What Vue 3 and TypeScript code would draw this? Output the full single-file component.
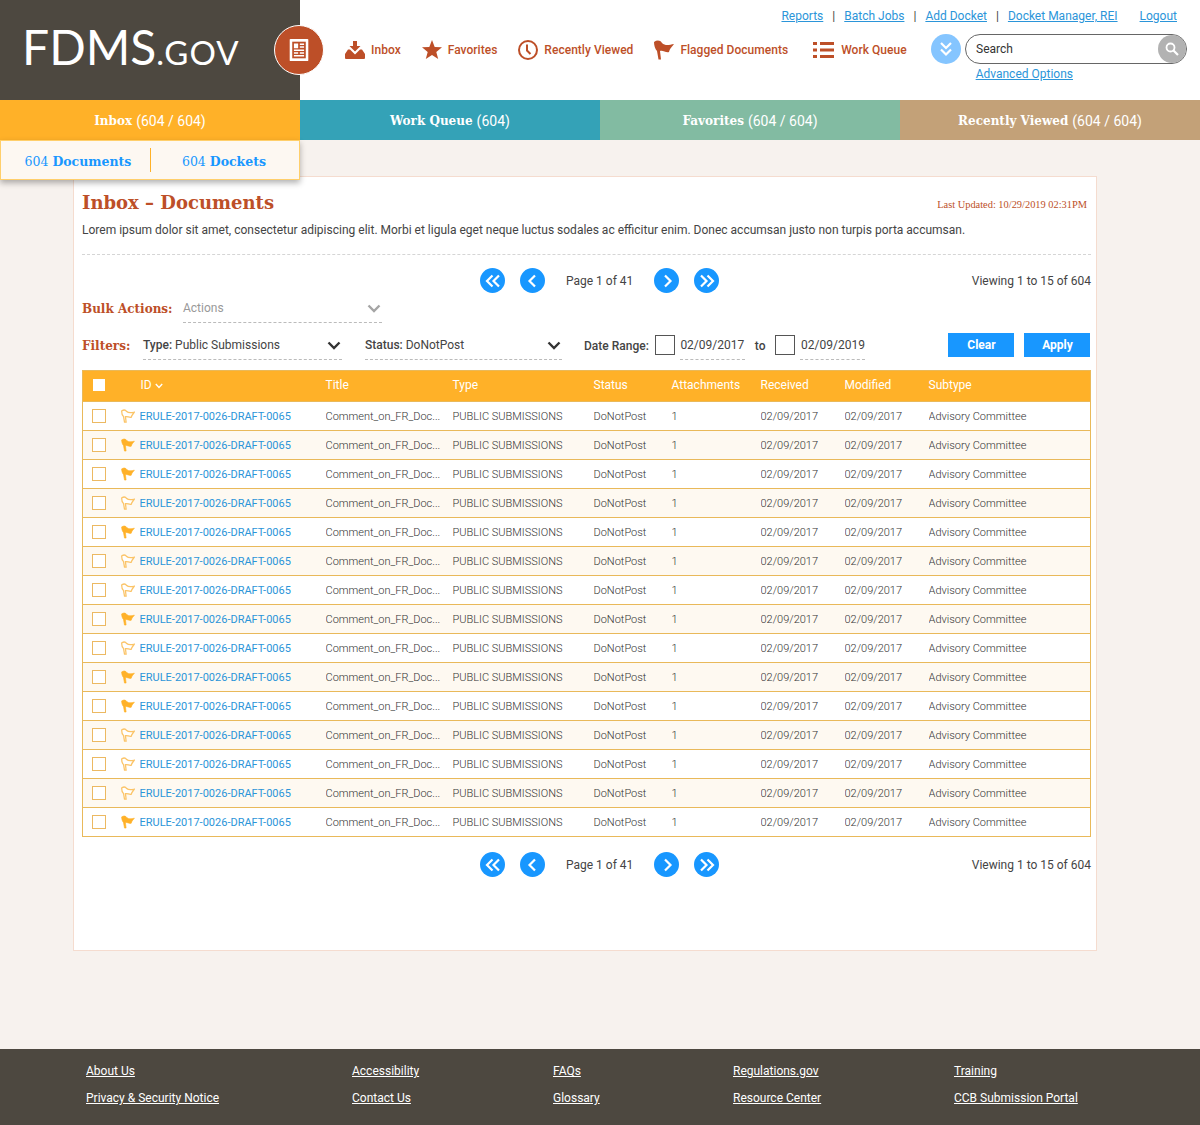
<script setup lang="ts">
const topLinks = ['Reports', 'Batch Jobs', 'Add Docket']
const tabs = [
  { name: 'Inbox', count: '(604 / 604)', cls: 'orange' },
  { name: 'Work Queue', count: '(604)', cls: 'teal' },
  { name: 'Favorites', count: '(604 / 604)', cls: 'green' },
  { name: 'Recently Viewed', count: '(604 / 604)', cls: 'tan' },
]
// filled flag or outline flag per row
const flags = [false, true, true, false, true, false, false, true, false, true, true, false, false, false, true]
const columns = ['Title', 'Type', 'Status', 'Attachments', 'Received', 'Modified', 'Subtype']
const footer = [
  ['About Us', 'Privacy & Security Notice'],
  ['Accessibility', 'Contact Us'],
  ['FAQs', 'Glossary'],
  ['Regulations.gov', 'Resource Center'],
  ['Training', 'CCB Submission Portal'],
]
const flagPath = 'M0 2 C3 0 6 0 8 3 C11 6 15 5 20 4 C18 7 16 8 15 12 C12 13 9 10 6 11 L7 19.5 L4.5 19.5 L3 11 C1 9 0 5 0 2 Z'
</script>

<template>
  <div class="page">
    <header class="top">
      <div class="logo">
        <span class="logo-big">FDMS</span><span class="logo-small">.GOV</span>
        <span class="logo-badge">
          <svg width="22" height="24" viewBox="0 0 26 26" preserveAspectRatio="none">
            <rect x="2" y="1" width="22" height="24" rx="1" fill="#fff" />
            <rect x="5" y="4" width="16" height="18" fill="#bd4f28" />
            <path d="M7 6h5v5H7zM14 6h5v1.500h-5zM14 9h5v1.500h-5zM7 12.500h12V14H7zM7 15.500h5V17H7zM14 15.500h5V17h-5zM7 18.500h12V20H7z" fill="#fff" />
          </svg>
        </span>
      </div>
      <nav class="nav">
        <a class="nav-item">
          <svg width="20" height="18" viewBox="0 0 20 18">
            <path d="M8 0h4v5h3.500L10 10.500 4.500 5H8z" fill="#bd4f28" />
            <path d="M0 13l3-4.500h2L10 13.500l5-5h2l3 4.500v4a1 1 0 0 1-1 1H1a1 1 0 0 1-1-1z" fill="#bd4f28" />
          </svg>
          Inbox
        </a>
        <a class="nav-item">
          <svg width="20" height="20" viewBox="0 0 20 20">
            <polygon points="10,0 12.700,7 20,7.300 14.300,11.900 16.200,19 10,15 3.800,19 5.700,11.900 0,7.300 7.300,7" fill="#bd4f28" />
          </svg>
          Favorites
        </a>
        <a class="nav-item">
          <svg width="20" height="20" viewBox="0 0 20 20" fill="none" stroke="#bd4f28">
            <circle cx="10" cy="10" r="9" stroke-width="2" />
            <path d="M9 4.500V10.500L12.500 14" stroke-width="2" />
          </svg>
          Recently Viewed
        </a>
        <a class="nav-item">
          <svg width="20" height="20" viewBox="0 0 20 20">
            <path :d="flagPath" fill="#bd4f28" />
          </svg>
          Flagged Documents
        </a>
        <a class="nav-item queue">
          <svg width="21" height="16" viewBox="0 0 21 16">
            <path d="M0 0h4v3H0zM7 0h14v3H7zM0 6.500h4v3H0zM7 6.500h14v3H7zM0 13h4v3H0zM7 13h14v3H7z" fill="#bd4f28" />
          </svg>
          Work Queue
        </a>
      </nav>
      <div class="right">
        <div class="links">
          <template v-for="l in topLinks" :key="l">
            <a>{{ l }}</a><span class="sep">|</span>
          </template>
          <a>Docket Manager, REI</a>
          <a class="logout">Logout</a>
        </div>
        <div class="search-row">
          <span class="expand">
            <svg width="14" height="16" viewBox="0 0 14 16" fill="none" stroke="#fff" stroke-width="2.200">
              <path d="M2 2l5 5 5-5M2 8.500l5 5 5-5" />
            </svg>
          </span>
          <div class="search">
            <span>Search</span>
            <span class="search-btn">
              <svg width="14" height="14" viewBox="0 0 14 14" fill="none" stroke="#fff" stroke-width="1.800">
                <circle cx="5.500" cy="5.500" r="4" />
                <path d="M8.500 8.500L13 13" stroke-width="2.200" />
              </svg>
            </span>
          </div>
        </div>
        <a class="advanced">Advanced Options</a>
      </div>
    </header>

    <div class="tabs">
      <div v-for="t in tabs" :key="t.name" class="tab" :class="t.cls">
        <b>{{ t.name }}</b> {{ t.count }}
      </div>
      <div class="subtabs">
        <a>604 <b>Documents</b></a>
        <a>604 <b>Dockets</b></a>
      </div>
    </div>

    <main class="panel">
      <div class="title-row">
        <h1>Inbox – Documents</h1>
        <span class="updated">Last Updated: 10/29/2019 02:31PM</span>
      </div>
      <p class="intro">Lorem ipsum dolor sit amet, consectetur adipiscing elit. Morbi et ligula eget neque luctus sodales ac efficitur enim. Donec accumsan justo non turpis porta accumsan.</p>

      <div class="pager first">
        <span class="pg">
          <svg width="16" height="14" viewBox="0 0 16 14" fill="none" stroke="#fff" stroke-width="2.200"><path d="M7.500 1.500L2 7l5.500 5.500M14 1.500L8.500 7l5.500 5.500" /></svg>
        </span>
        <span class="pg">
          <svg width="16" height="14" viewBox="0 0 16 14" fill="none" stroke="#fff" stroke-width="2.200"><path d="M10 1.500L4.500 7l5.500 5.500" /></svg>
        </span>
        <span class="pg-text">Page 1 of 41</span>
        <span class="pg">
          <svg width="16" height="14" viewBox="0 0 16 14" fill="none" stroke="#fff" stroke-width="2.200"><path d="M6 1.500L11.500 7 6 12.500" /></svg>
        </span>
        <span class="pg">
          <svg width="16" height="14" viewBox="0 0 16 14" fill="none" stroke="#fff" stroke-width="2.200"><path d="M2 1.500L7.500 7 2 12.500M8.500 1.500L14 7l-5.500 5.500" /></svg>
        </span>
        <span class="viewing">Viewing 1 to 15 of 604</span>
      </div>

      <div class="bulk">
        <span class="slab-label">Bulk Actions:</span>
        <div class="select bulk-select">
          <span>Actions</span>
          <svg width="14" height="9" viewBox="0 0 14 9" fill="none" stroke="#a5a5a5" stroke-width="2.400"><path d="M1.500 1.500L7 7l5.500-5.500" /></svg>
        </div>
      </div>

      <div class="filters">
        <span class="slab-label">Filters:</span>
        <div class="select type-select">
          <span><b>Type:</b> Public Submissions</span>
          <svg width="14" height="9" viewBox="0 0 14 9" fill="none" stroke="#333" stroke-width="2.400"><path d="M1.500 1.500L7 7l5.500-5.500" /></svg>
        </div>
        <div class="select status-select">
          <span><b>Status:</b> DoNotPost</span>
          <svg width="14" height="9" viewBox="0 0 14 9" fill="none" stroke="#333" stroke-width="2.400"><path d="M1.500 1.500L7 7l5.500-5.500" /></svg>
        </div>
        <b class="date-label">Date Range:</b>
        <span class="date-box"></span>
        <span class="date-val">02/09/2017</span>
        <b class="date-to">to</b>
        <span class="date-box"></span>
        <span class="date-val">02/09/2019</span>
        <button class="btn clear">Clear</button>
        <button class="btn">Apply</button>
      </div>

      <table class="docs">
        <colgroup>
          <col style="width: 38px" />
          <col style="width: 19px" />
          <col style="width: 186px" />
          <col style="width: 127px" />
          <col style="width: 141px" />
          <col style="width: 78px" />
          <col style="width: 89px" />
          <col style="width: 84px" />
          <col style="width: 84px" />
          <col />
        </colgroup>
        <thead>
          <tr>
            <th><span class="head-check"></span></th>
            <th></th>
            <th class="id-head">
              ID
              <svg class="sort" width="8" height="6" viewBox="0 0 8 6" fill="none" stroke="#fff" stroke-width="1.400"><path d="M.8 1L4 4.500 7.200 1" /></svg>
            </th>
            <th v-for="c in columns" :key="c">{{ c }}</th>
          </tr>
        </thead>
        <tbody>
          <tr v-for="(filled, i) in flags" :key="i">
            <td><span class="row-check"></span></td>
            <td>
              <svg class="flag" width="14" height="14" viewBox="-1 -1 22 22">
                <path :d="flagPath" :fill="filled ? '#ffb128' : '#fff'" :stroke="filled ? '#ffb128' : '#fbc468'" :stroke-width="filled ? 1 : 2" />
              </svg>
            </td>
            <td><a class="doc-id">ERULE-2017-0026-DRAFT-0065</a></td>
            <td>Comment_on_FR_Doc...</td>
            <td>PUBLIC SUBMISSIONS</td>
            <td>DoNotPost</td>
            <td>1</td>
            <td>02/09/2017</td>
            <td>02/09/2017</td>
            <td>Advisory Committee</td>
          </tr>
        </tbody>
      </table>

      <div class="pager">
        <span class="pg">
          <svg width="16" height="14" viewBox="0 0 16 14" fill="none" stroke="#fff" stroke-width="2.200"><path d="M7.500 1.500L2 7l5.500 5.500M14 1.500L8.500 7l5.500 5.500" /></svg>
        </span>
        <span class="pg">
          <svg width="16" height="14" viewBox="0 0 16 14" fill="none" stroke="#fff" stroke-width="2.200"><path d="M10 1.500L4.500 7l5.500 5.500" /></svg>
        </span>
        <span class="pg-text">Page 1 of 41</span>
        <span class="pg">
          <svg width="16" height="14" viewBox="0 0 16 14" fill="none" stroke="#fff" stroke-width="2.200"><path d="M6 1.500L11.500 7 6 12.500" /></svg>
        </span>
        <span class="pg">
          <svg width="16" height="14" viewBox="0 0 16 14" fill="none" stroke="#fff" stroke-width="2.200"><path d="M2 1.500L7.500 7 2 12.500M8.500 1.500L14 7l-5.500 5.500" /></svg>
        </span>
        <span class="viewing">Viewing 1 to 15 of 604</span>
      </div>
    </main>

    <footer class="foot">
      <div v-for="(col, i) in footer" :key="i" class="foot-col">
        <a v-for="l in col" :key="l">{{ l }}</a>
      </div>
    </footer>
  </div>
</template>

<style>
body {
  background: #f7f2ee;
}
</style>

<style scoped>
.page {
  width: 1200px;
  height: 1125px;
  display: flex;
  flex-direction: column;
  background: #f7f2ee;
  font-family: Roboto, "Liberation Sans", sans-serif;
  font-size: 12px;
  color: #444;
}

a {
  color: inherit;
}

.top {
  height: 100px;
  display: flex;
  background: #fff;
}

.logo {
  position: relative;
  width: 300px;
  flex-shrink: 0;
  box-sizing: border-box;
  padding: 18px 0 0 22px;
  background: #4d4840;
  color: #fff;
  font-family: Lato, "Open Sans", sans-serif;
  line-height: 58px;
  white-space: nowrap;
}

.logo-big {
  font-size: 48px;
}

.logo-small {
  font-size: 33px;
  letter-spacing: 1px;
}

.logo-badge {
  position: absolute;
  left: 274px;
  top: 25px;
  width: 50px;
  height: 50px;
  box-sizing: border-box;
  border: 1.500px solid #fff;
  border-radius: 50%;
  background: #bd4f28;
  display: flex;
  align-items: center;
  justify-content: center;
}

.nav {
  display: flex;
  align-items: center;
  gap: 21px;
  height: 100px;
  padding-left: 45px;
  color: #bd4f28;
  font-weight: 500;
  letter-spacing: 0.03px;
  white-space: nowrap;
}

.nav-item {
  display: flex;
  align-items: center;
  gap: 6px;
  margin-top: -1px;
}

.queue {
  gap: 7px;
  margin-left: 4px;
}

.right {
  position: relative;
  flex: 1;
  min-width: 0;
  color: #2b95d9;
}

.links {
  position: absolute;
  top: 9px;
  right: 23px;
  display: flex;
  gap: 9px;
  white-space: nowrap;
}

.links a,
.advanced {
  text-decoration: underline;
}

.sep {
  color: #444;
}

.logout {
  margin-left: 13px;
}

.search-row {
  position: absolute;
  top: 34px;
  right: 13px;
  display: flex;
  gap: 4px;
}

.expand {
  width: 30px;
  height: 30px;
  border-radius: 50%;
  background: #85c5ff;
  display: flex;
  align-items: center;
  justify-content: center;
}

.search {
  width: 222px;
  height: 30px;
  box-sizing: border-box;
  padding-left: 10px;
  border: 1px solid #666;
  border-radius: 15px;
  display: flex;
  align-items: center;
  justify-content: space-between;
  color: #333;
}

.search-btn {
  width: 28px;
  height: 28px;
  border-radius: 50%;
  background: #b2b2b2;
  display: flex;
  align-items: center;
  justify-content: center;
}

.advanced {
  position: absolute;
  top: 67px;
  right: 127px;
}

.tabs {
  position: relative;
  display: grid;
  grid-template-columns: repeat(4, 300px);
  height: 40px;
}

.tab {
  display: flex;
  align-items: center;
  justify-content: center;
  gap: 4px;
  padding-top: 1px;
  color: #fff;
  font-size: 14px;
}

.tab b {
  font-family: "DejaVu Serif", serif;
  font-size: 12px;
}

.orange {
  background: #ffb128;
}

.teal {
  background: #34a2b7;
}

.green {
  background: #82bba2;
}

.tan {
  background: #c3a178;
}

.subtabs {
  position: absolute;
  left: 0;
  top: 40px;
  z-index: 2;
  width: 300px;
  height: 40px;
  box-sizing: border-box;
  border: 1px solid #ffcf6b;
  background: #fdf8f2;
  box-shadow: 0 3px 6px rgba(0, 0, 0, 0.3);
  display: flex;
  align-items: center;
  color: #1897ff;
  font-family: "DejaVu Serif", serif;
  font-size: 12.500px;
}

.subtabs a {
  flex: 0 0 150px;
  box-sizing: border-box;
  height: 24px;
  line-height: 28px;
  padding-right: 4px;
  text-align: center;
  white-space: nowrap;
}

.subtabs a:first-child {
  padding: 0 0 0 5px;
  border-right: 1px solid #ffb128;
}

.panel {
  width: 1024px;
  height: 775px;
  box-sizing: border-box;
  margin: 36px 0 0 73px;
  padding: 0 5px 0 8px;
  background: #fff;
  border: 1px solid #f5dccf;
}

.title-row {
  display: flex;
  justify-content: space-between;
  align-items: center;
  height: 34px;
  margin-top: 8px;
  padding-right: 4px;
}

h1 {
  margin: 0;
  color: #bd4f28;
  font-family: "DejaVu Serif", serif;
  font-size: 18px;
  font-weight: 700;
}

.updated {
  margin-top: 4px;
  color: #bd4f28;
  font-family: "Liberation Serif", serif;
  font-size: 10.400px;
}

.intro {
  margin: 3px 0 0;
  padding-bottom: 16px;
  line-height: 16px;
  border-bottom: 1px dashed #d5d5d5;
}

.pager {
  display: flex;
  align-items: center;
  height: 25px;
  margin-top: 15px;
  padding-left: 398px;
}

.first {
  margin-top: 13px;
}

.pg {
  width: 25px;
  height: 25px;
  margin-right: 15px;
  border-radius: 50%;
  background: #1897ff;
  display: flex;
  align-items: center;
  justify-content: center;
}

.pg-text {
  width: 74px;
  margin: 0 14px 0 6px;
  white-space: nowrap;
}

.viewing {
  margin-left: auto;
  white-space: nowrap;
}

.slab-label {
  color: #bd4f28;
  font-family: "DejaVu Serif", serif;
  font-size: 12px;
  font-weight: 700;
  white-space: nowrap;
}

.bulk {
  display: flex;
  align-items: center;
  height: 29px;
  margin-top: 1px;
}

.bulk .slab-label {
  width: 101px;
}

.select {
  display: flex;
  align-items: center;
  justify-content: space-between;
  height: 29px;
  box-sizing: border-box;
  border-bottom: 1px dashed #bbb;
  white-space: nowrap;
}

.bulk-select {
  width: 199px;
  padding-right: 1px;
  color: #999;
}

.filters {
  display: flex;
  align-items: center;
  height: 29px;
  margin-top: 8px;
}

.filters .slab-label {
  width: 61px;
}

.type-select {
  width: 199px;
  padding-right: 1px;
  margin-right: 23px;
}

.status-select {
  width: 197px;
  padding-right: 1px;
  margin-right: 22px;
}

.select b {
  font-weight: 500;
}

.date-label,
.date-to {
  font-weight: 500;
}

.date-box {
  width: 20px;
  height: 20px;
  box-sizing: border-box;
  margin: -1px 5px 0 6px;
  border: 1px solid #555;
}

.date-val {
  width: 65px;
  line-height: 28px;
  border-bottom: 1px dashed #bbb;
  text-align: center;
}

.date-to {
  margin: 0 4px 0 10px;
}

.btn {
  width: 66px;
  height: 24px;
  margin: -1px 0 0 10px;
  padding: 0;
  border: 0;
  background: #1897ff;
  color: #fff;
  font: 700 12px Roboto, sans-serif;
}

.clear {
  margin-left: 83px;
}

.docs {
  width: 1009px;
  margin-top: 10px;
  table-layout: fixed;
  border-collapse: collapse;
  border: 1px solid #e9b95a;
  font-size: 11px;
  font-weight: 300;
  color: #333;
}

thead tr {
  height: 31px;
  background: #ffb128;
  color: #fff;
  font-size: 12px;
}

th {
  padding: 0 0 2px;
  font-weight: 400;
  text-align: left;
}

.id-head {
  padding-left: 1px;
}

tbody tr {
  height: 29px;
  border-top: 1px solid #e9b95a;
}

tbody tr:nth-child(even) {
  background: #fef9f1;
}

td {
  padding: 0;
  white-space: nowrap;
  overflow: hidden;
}

.head-check,
.row-check {
  display: block;
  width: 14px;
  height: 14px;
  box-sizing: border-box;
  margin-left: 9px;
}

.head-check {
  width: 12px;
  height: 12px;
  margin-left: 10px;
  background: #fff;
}

.row-check {
  border: 1.500px solid #ecb962;
  background: #fff;
}

.flag {
  display: block;
}

.doc-id {
  color: #2b95d9;
  font-weight: 400;
}

.foot {
  display: grid;
  grid-template-columns: 266px 201px 180px 221px 1fr;
  height: 76px;
  box-sizing: border-box;
  margin-top: auto;
  padding: 15px 0 0 86px;
  background: #4d4840;
  color: #fff;
}

.foot-col {
  display: flex;
  flex-direction: column;
  align-items: flex-start;
  gap: 13px;
  line-height: 14px;
}

.foot-col a {
  text-decoration: underline;
}
</style>
